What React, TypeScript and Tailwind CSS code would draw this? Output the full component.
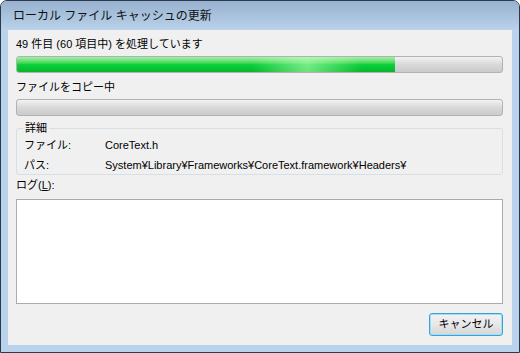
import type { ReactNode } from 'react'

const font = { fontFamily: '"Liberation Sans", "Noto Sans CJK JP", sans-serif' }

function Bar({ value }: { value: number }) {
  return (
    <div className="relative h-[17px] overflow-hidden rounded-[3px] border border-[#b2b2b2] bg-gradient-to-b from-[#f3f3f3] via-[#d9d9d9] to-[#cbcbcb]">
      {value > 0 && (
        <div className="absolute inset-y-0 left-0 bg-gradient-to-b from-[#9ff0a8] via-[#0bd23a] to-[#07b42c]" style={{ width: `${value}%` }}>
          <div className="absolute inset-y-0 left-[62%] w-[110px] bg-gradient-to-r from-transparent via-[#b8ffb8]/60 to-transparent" />
        </div>
      )}
    </div>
  )
}

function Row({ label, children }: { label: string; children: ReactNode }) {
  return (
    <div className="flex h-[20px] items-center">
      <span className="w-[81px]">{label}</span>
      <span>{children}</span>
    </div>
  )
}

export default function App() {
  return (
    <div style={font} className="flex h-[353px] w-[520px] flex-col overflow-hidden rounded-t-[7px] border border-[#2b3a4a] bg-[#bad3ec] text-[11px] text-black">
      <div className="flex h-[29px] shrink-0 items-center bg-gradient-to-b from-[#97b1cf] to-[#bad2ea] pl-[12px] text-[12px] text-[#111]">
        ローカル ファイル キャッシュの更新
      </div>
      <div className="mx-[7px] mb-[7px] flex flex-1 flex-col bg-[#f0f0f0] pl-[8px] pr-[9px]">
        <div className="mt-[6px] h-[17px] leading-[17px]">49 件目 (60 項目中) を処理しています</div>
        <div className="mt-[3px]"><Bar value={78} /></div>
        <div className="mt-[6px] h-[17px] leading-[17px]">ファイルをコピー中</div>
        <div className="mt-[3px]"><Bar value={0} /></div>
        <div className="relative mt-[12px] h-[47px] rounded-[3px] border border-[#d5dfe5] pl-[7px] pt-[6px]">
          <span className="absolute -top-[9px] left-[6px] bg-[#f0f0f0] px-[2px] leading-[17px]">詳細</span>
          <Row label="ファイル:">CoreText.h</Row>
          <Row label="パス:">System¥Library¥Frameworks¥CoreText.framework¥Headers¥</Row>
        </div>
        <div className="mt-[2px] h-[17px] leading-[17px]">ログ(<span className="underline">L</span>):</div>
        <div className="mt-[5px] h-[105px] border border-[#ababab] bg-white" />
        <div className="mt-[9px] flex justify-end">
          <button className="h-[23px] w-[74px] rounded-[3px] border border-[#3c9fd8] bg-gradient-to-b from-[#f2f2f2] via-[#e8e8e8] to-[#d5d5d5] text-[11px] leading-none shadow-[inset_0_0_0_1px_#a6dcf5]">
            キャンセル
          </button>
        </div>
      </div>
    </div>
  )
}
